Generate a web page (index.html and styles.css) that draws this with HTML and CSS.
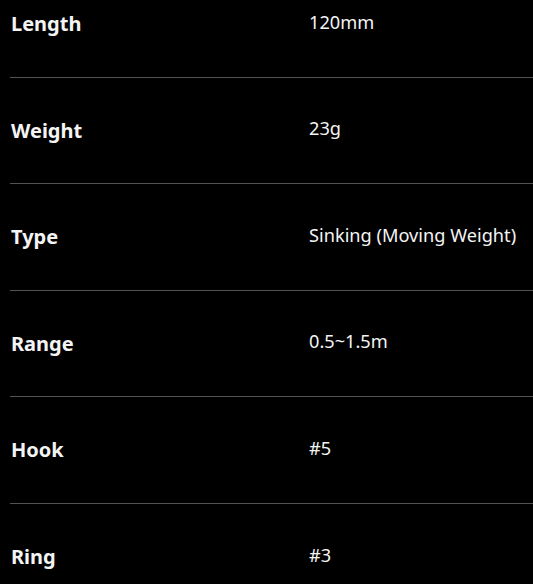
FILE: index.html
```html
<!DOCTYPE html>
<html lang="en">
<head>
<meta charset="utf-8">
<title>Specs</title>
<link rel="stylesheet" href="styles.css">
</head>
<body>
<div class="specs">
  <div class="row"><div class="label">Length</div><div class="value">120mm</div></div>
  <div class="row"><div class="label">Weight</div><div class="value">23g</div></div>
  <div class="row"><div class="label">Type</div><div class="value">Sinking (Moving Weight)</div></div>
  <div class="row"><div class="label">Range</div><div class="value">0.5~1.5m</div></div>
  <div class="row"><div class="label">Hook</div><div class="value">#5</div></div>
  <div class="row"><div class="label">Ring</div><div class="value">#3</div></div>
</div>
</body>
</html>
```
FILE: styles.css
```css
html, body {
  margin: 0;
  padding: 0;
  background: #000;
  overflow: hidden;
}
body {
  font-family: "Noto Sans", "Open Sans", sans-serif;
  color: #f4f4f4;
}
.specs {
  margin-top: -29px;
  padding-left: 10px;
}
.row {
  display: grid;
  grid-template-columns: 299px 1fr;
  align-items: center;
  height: 106.5px;
  box-sizing: border-box;
  border-bottom: 1px solid #525252;
}
.row:last-child {
  border-bottom: none;
}
.label {
  padding-left: 1px;
  font-size: 20px;
  font-weight: 700;
}
.value {
  margin-bottom: 4px;
  font-size: 18.2px;
  font-weight: 400;
}
```
